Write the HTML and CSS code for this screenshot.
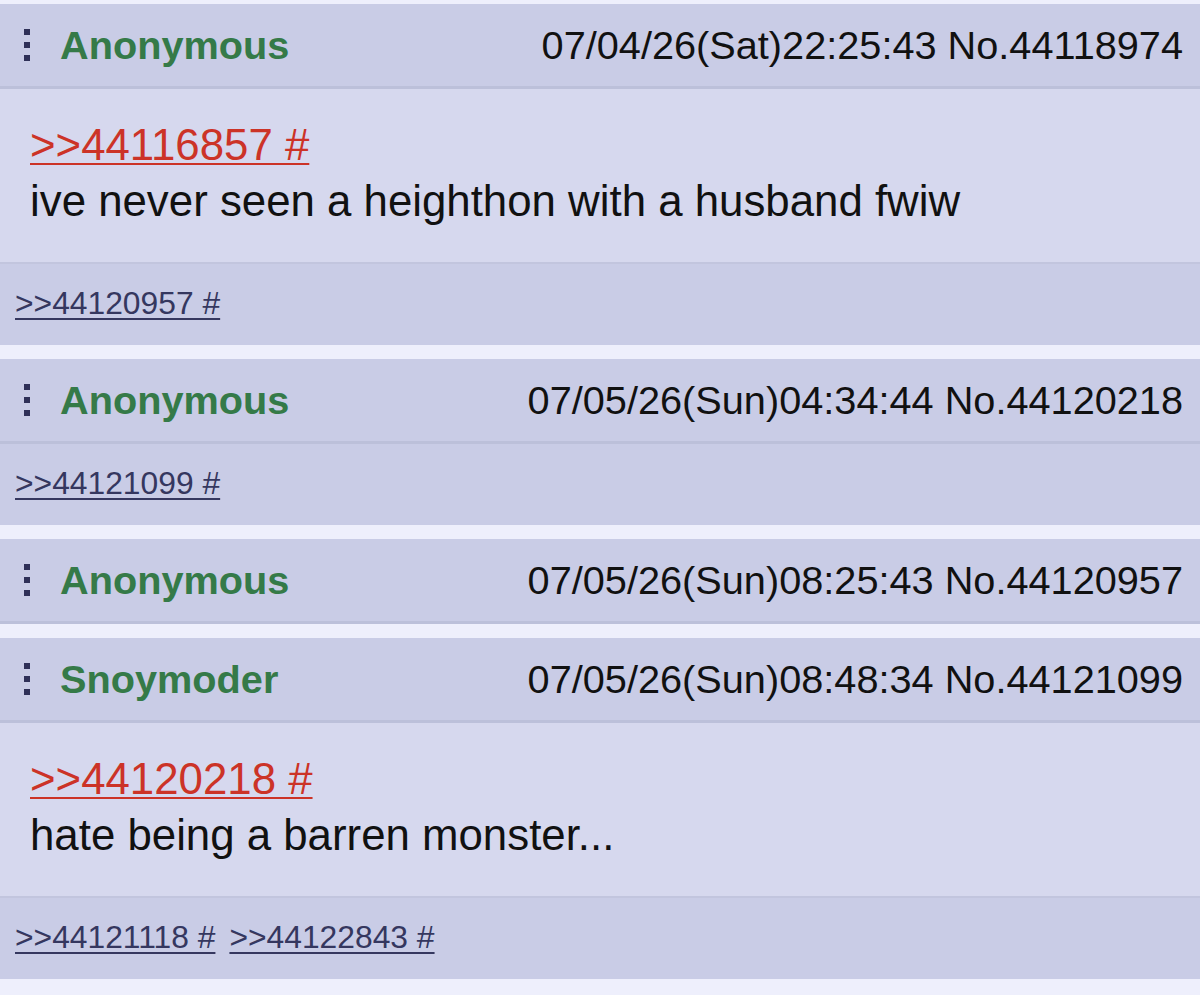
FILE: index.html
```html
<!DOCTYPE html>
<html lang="en">
<head>
<meta charset="utf-8">
<title>Thread</title>
<link rel="stylesheet" href="styles.css">
</head>
<body>
<div class="thread">

  <article class="post">
    <header class="post-head">
      <span class="menu"><i></i><i></i><i></i></span>
      <span class="name">Anonymous</span>
      <span class="meta">07/04/26(Sat)22:25:43 No.44118974</span>
    </header>
    <div class="post-body">
      <a class="quote" href="#">&gt;&gt;44116857 #</a>
      <p class="text">ive never seen a heighthon with a husband fwiw</p>
    </div>
    <footer class="post-replies">
      <a href="#">&gt;&gt;44120957 #</a>
    </footer>
  </article>

  <article class="post">
    <header class="post-head">
      <span class="menu"><i></i><i></i><i></i></span>
      <span class="name">Anonymous</span>
      <span class="meta">07/05/26(Sun)04:34:44 No.44120218</span>
    </header>
    <footer class="post-replies">
      <a href="#">&gt;&gt;44121099 #</a>
    </footer>
  </article>

  <article class="post">
    <header class="post-head">
      <span class="menu"><i></i><i></i><i></i></span>
      <span class="name">Anonymous</span>
      <span class="meta">07/05/26(Sun)08:25:43 No.44120957</span>
    </header>
  </article>

  <article class="post">
    <header class="post-head">
      <span class="menu"><i></i><i></i><i></i></span>
      <span class="name">Snoymoder</span>
      <span class="meta">07/05/26(Sun)08:48:34 No.44121099</span>
    </header>
    <div class="post-body">
      <a class="quote" href="#">&gt;&gt;44120218 #</a>
      <p class="text">hate being a barren monster...</p>
    </div>
    <footer class="post-replies">
      <a href="#">&gt;&gt;44121118 #</a>
      <a href="#">&gt;&gt;44122843 #</a>
    </footer>
  </article>

</div>
</body>
</html>
```

FILE: styles.css
```css
html, body {
  margin: 0;
  padding: 0;
}

body {
  background: #eeeffc;
  font-family: "Liberation Sans", Arial, sans-serif;
  color: #111;
}

.thread {
  display: flex;
  flex-direction: column;
  gap: 14px;
  padding-top: 4px;
}

.post {
  display: flex;
  flex-direction: column;
}

/* header bar: menu dots, poster name, date and number */
.post-head {
  height: 85px;
  box-sizing: border-box;
  display: flex;
  align-items: center;
  padding: 0 17px 0 24px;
  background: #c9cce6;
  border-bottom: 3px solid #bcc0da;
  font-size: 39.7px;
}

.menu {
  display: flex;
  flex-direction: column;
  gap: 7px;
  width: 36px;
  margin-top: -1px;
}

.menu i {
  display: block;
  width: 6px;
  height: 6px;
  background: #2f3058;
}

.name {
  font-weight: bold;
  color: #357a48;
}

.meta {
  margin-left: auto;
  color: #111;
}

/* message text */
.post-body {
  height: 175px;
  box-sizing: border-box;
  padding: 28px 28px 0 30px;
  background: #d6d8ee;
  border-bottom: 2px solid #c2c5de;
  font-size: 43.8px;
  line-height: 56px;
}

.quote {
  display: block;
  width: max-content;
  color: #cc3327;
  text-decoration: underline;
  text-decoration-thickness: 2px;
  text-underline-offset: 3px;
}

.text {
  margin: 0;
  color: #111;
}

/* backlinks row */
.post-replies {
  height: 81px;
  box-sizing: border-box;
  display: flex;
  align-items: center;
  gap: 14px;
  padding: 0 0 2px 15px;
  background: #c9cce6;
  font-size: 31.8px;
}

.post-replies a {
  color: #35375f;
  text-decoration: underline;
  text-decoration-thickness: 2px;
  text-underline-offset: 4px;
}
```
